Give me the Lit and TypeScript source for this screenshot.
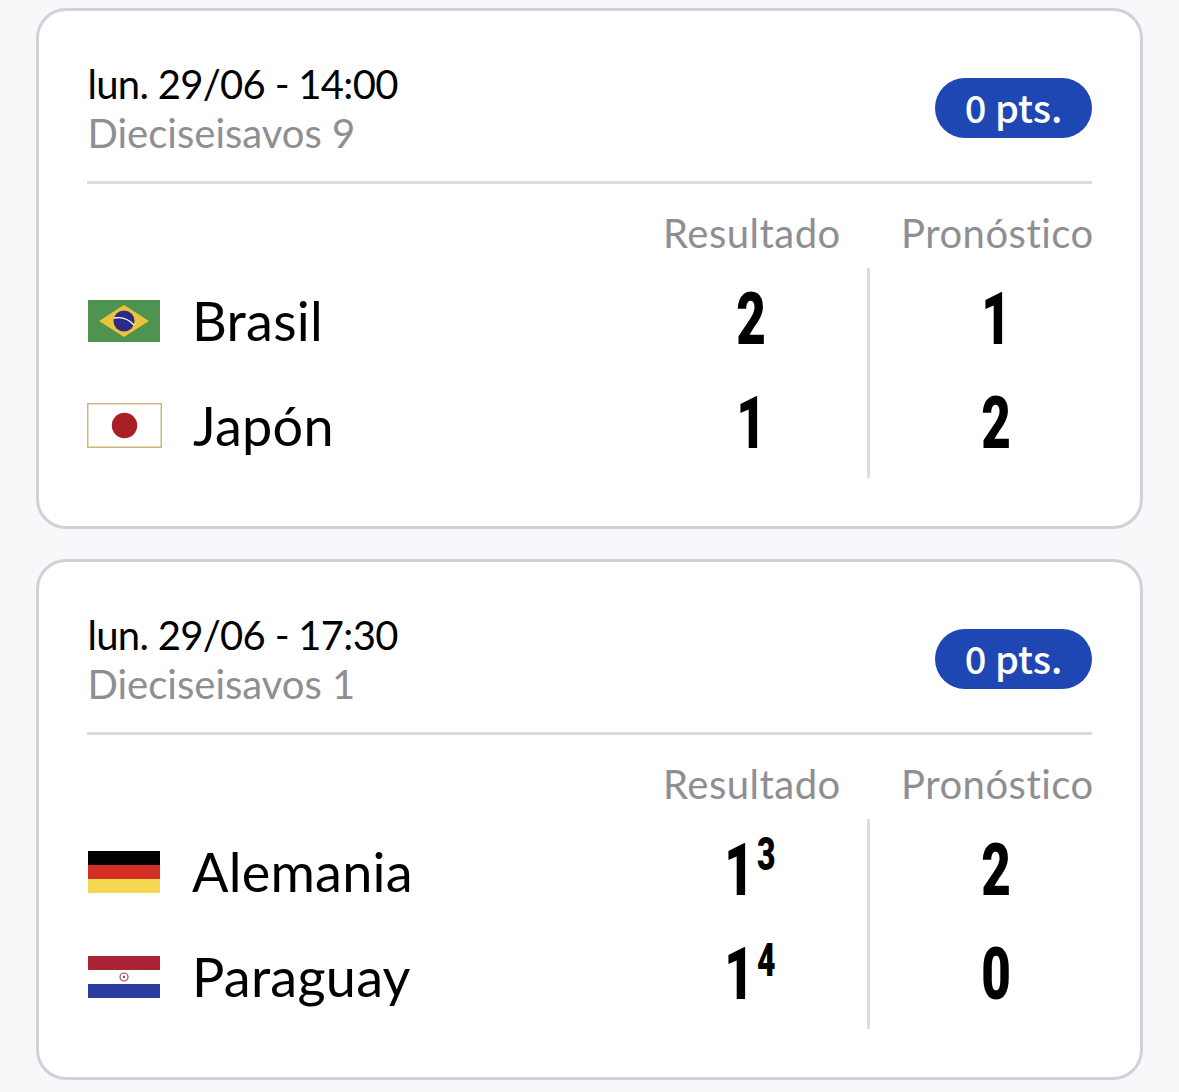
import {css, html, LitElement} from 'lit';
import {customElement} from 'lit/decorators.js';

const flags: Record<string, unknown> = {
  brasil: html`<svg class="flag" viewBox="0 0 72 42">
    <rect width="72" height="42" fill="#4f9350" />
    <path d="M11 21 36 5 61 21 36 37z" fill="#ecc43c" />
    <circle cx="36" cy="21" r="10.5" fill="#2d2a85" />
    <path d="M26 18q12-2 20 7" fill="none" stroke="#fff" stroke-width="1.3" />
  </svg>`,
  japon: html`<svg class="flag flag-jp" viewBox="0 0 75 45">
    <rect x=".75" y=".75" width="73.5" height="43.5" fill="#fff" stroke="#cdb77c" stroke-width="1.5" />
    <circle cx="37.5" cy="22.5" r="12.7" fill="#a81f26" />
  </svg>`,
  alemania: html`<svg class="flag" viewBox="0 0 72 42">
    <rect width="72" height="14" fill="#000" />
    <rect y="14" width="72" height="14.5" fill="#d22f27" />
    <rect y="28" width="72" height="14" fill="#f3d84f" />
  </svg>`,
  paraguay: html`<svg class="flag" viewBox="0 0 72 42">
    <rect width="72" height="14" fill="#ab2337" />
    <rect y="14" width="72" height="14" fill="#fff" />
    <rect y="28" width="72" height="14" fill="#2c3c9f" />
    <circle cx="36" cy="21" r="4" fill="none" stroke="#a8475f" stroke-width="1.2" />
    <circle cx="36" cy="21" r="1.2" fill="#6b5a5f" />
  </svg>`,
};

interface Team {
  name: string;
  flag: string;
  result: string;
  penalties?: string;
  forecast: string;
}

interface Match {
  date: string;
  round: string;
  teams: Team[];
}

const matches: Match[] = [
  {
    date: 'lun. 29/06 - 14:00',
    round: 'Dieciseisavos 9',
    teams: [
      {name: 'Brasil', flag: 'brasil', result: '2', forecast: '1'},
      {name: 'Japón', flag: 'japon', result: '1', forecast: '2'},
    ],
  },
  {
    date: 'lun. 29/06 - 17:30',
    round: 'Dieciseisavos 1',
    teams: [
      {name: 'Alemania', flag: 'alemania', result: '1', penalties: '3', forecast: '2'},
      {name: 'Paraguay', flag: 'paraguay', result: '1', penalties: '4', forecast: '0'},
    ],
  },
];

@customElement('app-root')
export class AppRoot extends LitElement {
  static styles = css`
    :host {
      display: block;
      height: 1092px;
      overflow: hidden;
      background: #f8f8fb;
      font-family: Lato, sans-serif;
      font-variant-ligatures: none;
      color: #000;
    }
    .list {
      display: flex;
      flex-direction: column;
      gap: 30px;
      padding: 8px 36px 0;
    }
    .card {
      box-sizing: border-box;
      height: 521px;
      padding: 49.5px 48px 0;
      background: #fff;
      border: 3px solid #d1d1d9;
      border-radius: 30px;
    }
    .head {
      display: flex;
      justify-content: space-between;
      align-items: center;
      height: 125px;
      margin-top: -2px;
      border-bottom: 3px solid #dcdce0;
      box-sizing: border-box;
    }
    .info {
      align-self: flex-start;
      padding-left: 0.5px;
    }
    .date {
      font-size: 40px;
      line-height: 50px;
      letter-spacing: -0.7px;
    }
    .round {
      font-size: 40px;
      line-height: 48px;
      color: #8e8e93;
    }
    .pts {
      box-sizing: border-box;
      width: 157px;
      height: 60px;
      margin-bottom: 24px;
      padding-bottom: 3px;
      display: flex;
      align-items: center;
      justify-content: center;
      border-radius: 30px;
      background: #1f47b3;
      color: #fff;
      font-family: 'Noto Sans CJK JP', 'Noto Sans', sans-serif;
      font-size: 38px;
      font-weight: 500;
    }
    .table {
      display: grid;
      grid-template-columns: 1fr 176px 28px 3px 31px 190px;
      grid-template-rows: 84px 106px 106px;
      padding-right: 1px;
    }
    .label {
      align-self: end;
      padding-bottom: 11px;
      font-size: 40px;
      line-height: 48px;
      letter-spacing: 0.5px;
      color: #8e8e93;
      white-space: nowrap;
    }
    .label.res {
      grid-column: 2;
      text-align: center;
    }
    .label.pro {
      grid-column: 6;
      text-align: right;
    }
    .team {
      grid-column: 1;
      display: flex;
      align-items: center;
      gap: 32px;
      font-size: 54px;
      letter-spacing: 0.25px;
    }
    .team.low {
      padding-bottom: 2px;
    }
    .flag {
      width: 72px;
      height: 42px;
      margin-left: 1px;
      flex: none;
    }
    .flag-jp {
      width: 75px;
      height: 45px;
      margin-left: 0;
      margin-right: -1px;
    }
    .score {
      position: relative;
      padding-top: 2px;
      font-family: Roboto, sans-serif;
      font-weight: 900;
      font-size: 73px;
      line-height: 98px;
      text-align: center;
    }
    .score.low {
      padding-top: 0;
    }
    .digit {
      display: inline-block;
      transform: scaleX(0.7);
    }
    .score.res {
      grid-column: 2;
    }
    .score.pro {
      grid-column: 6;
    }
    .score.has-pen {
      text-align: left;
      padding-left: 55px;
    }
    .pen {
      position: absolute;
      left: 94px;
      top: 5px;
      font-size: 47px;
      line-height: 60px;
      transform: scaleX(0.68);
      transform-origin: left center;
    }
    .divider {
      grid-column: 4;
      grid-row: 2 / 4;
      height: 210px;
      background: #dcdce0;
    }
  `;

  renderTeam(team: Team, row: number) {
    const low = row > 2 ? 'low' : '';
    return html`
      <div class="team ${low}" style="grid-row: ${row}">${flags[team.flag]}<span>${team.name}</span></div>
      <div class="score res ${low} ${team.penalties ? 'has-pen' : ''}" style="grid-row: ${row}">
        <span class="digit">${team.result}</span>${team.penalties
          ? html`<span class="pen">${team.penalties}</span>`
          : ''}
      </div>
      <div class="score pro ${low}" style="grid-row: ${row}"><span class="digit">${team.forecast}</span></div>
    `;
  }

  render() {
    return html`
      <div class="list">
        ${matches.map(
          (m) => html`
            <section class="card">
              <div class="head">
                <div class="info">
                  <div class="date">${m.date}</div>
                  <div class="round">${m.round}</div>
                </div>
                <div class="pts">0 pts.</div>
              </div>
              <div class="table">
                <div class="label res">Resultado</div>
                <div class="label pro">Pronóstico</div>
                ${m.teams.map((t, i) => this.renderTeam(t, i + 2))}
                <div class="divider"></div>
              </div>
            </section>
          `
        )}
      </div>
    `;
  }
}
